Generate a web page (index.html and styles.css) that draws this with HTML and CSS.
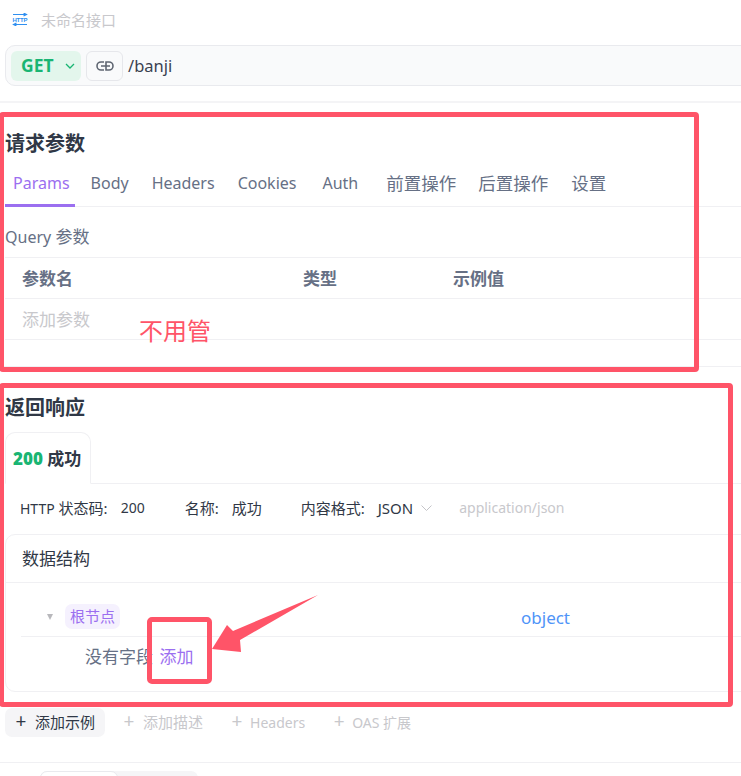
FILE: index.html
```html
<!DOCTYPE html>
<html lang="zh-CN">

<head>
  <meta charset="UTF-8">
  <meta name="viewport" content="width=device-width, initial-scale=1.0">
  <title>未命名接口</title>
  <link rel="stylesheet" href="styles.css">
</head>

<body>
  <div class="page">
    <!-- 接口名称 -->
    <div class="api-name">
      <svg class="http-icon" width="16" height="13" viewBox="0 0 16 13" fill="none" stroke="#2f8ff0" stroke-width="1.200">
        <path d="M1 1.500h13.500M11.500 0l3 1.500-3 1.500M15 11.500H1.500M4.500 10l-3 1.500 3 1.500" />
        <text class="http-text" x="0.500" y="8.800" textLength="15">HTTP</text>
      </svg>
      <span>未命名接口</span>
    </div>

    <!-- 地址栏 -->
    <div class="url-bar">
      <div class="method">
        <span>GET</span>
        <svg class="method-arrow" width="10" height="6" viewBox="0 0 10 6" fill="none" stroke="#19b573" stroke-width="1.300">
          <path d="M1 1l4 4 4-4" />
        </svg>
      </div>
      <div class="link-btn">
        <svg width="18" height="12" viewBox="0 0 18 12" fill="none" stroke="#5f6672" stroke-width="1.600">
          <path d="M8 2H5a4 4 0 0 0 0 8h3M10 2h3a4 4 0 0 1 0 8h-3zM5 6h9" />
        </svg>
      </div>
      <span class="url-text">/banji</span>
    </div>

    <!-- 请求参数 -->
    <section class="request">
      <h2 class="block-title">请求参数</h2>
      <div class="tabs">
        <span class="tab tab-en active">Params</span>
        <span class="tab tab-en">Body</span>
        <span class="tab tab-en">Headers</span>
        <span class="tab tab-en">Cookies</span>
        <span class="tab tab-en">Auth</span>
        <span class="tab">前置操作</span>
        <span class="tab">后置操作</span>
        <span class="tab">设置</span>
      </div>
      <div class="query-title"><span class="query-en">Query</span> 参数</div>
      <div class="param-row param-head">
        <span class="col-name">参数名</span>
        <span class="col-type">类型</span>
        <span>示例值</span>
      </div>
      <div class="param-row param-empty">添加参数</div>
    </section>

    <!-- 返回响应 -->
    <section class="response">
      <h2 class="block-title">返回响应</h2>
      <div class="resp-tabs">
        <div class="resp-tab"><b class="code">200</b> 成功</div>
      </div>
      <div class="resp-meta">
        <span class="meta-label"><span class="meta-en">HTTP</span> 状态码:</span>
        <span class="meta-en meta-code">200</span>
        <span class="meta-label">名称:</span>
        <span class="meta-name">成功</span>
        <span class="meta-label">内容格式:</span>
        <span>JSON</span>
        <svg class="meta-chevron" width="11" height="6" viewBox="0 0 11 6" fill="none" stroke="#c4c4c8" stroke-width="1">
          <path d="M.5.500l5 5 5-5" />
        </svg>
        <span class="meta-en meta-mime">application/json</span>
      </div>
      <div class="schema">
        <div class="schema-head">数据结构</div>
        <div class="schema-root">
          <span class="caret"></span>
          <span class="root-tag">根节点</span>
          <span class="root-type">object</span>
        </div>
        <div class="schema-empty">没有字段 <a class="add-link">添加</a></div>
      </div>
    </section>

    <!-- 底部操作 -->
    <div class="actions">
      <span class="action primary"><i>+</i>添加示例</span>
      <span class="action"><i>+</i>添加描述</span>
      <span class="action action-en"><i>+</i>Headers</span>
      <span class="action action-en"><i>+</i>OAS 扩展</span>
    </div>

    <div class="bottom-tabs">
      <span class="bottom-tab on"></span>
      <span class="bottom-tab"></span>
    </div>

    <!-- 截图上的红色标注 -->
    <div class="mark mark-request"></div>
    <div class="mark mark-response"></div>
    <div class="mark mark-add"></div>
    <div class="mark-text">不用管</div>
    <svg class="mark-arrow" width="110" height="60" viewBox="0 0 110 60">
      <polygon points="2,55 17,31 23,37 108,1 30,46 31,58" fill="#ff5468" />
    </svg>
  </div>
</body>

</html>
```

FILE: styles.css
```css
* {
  box-sizing: border-box;
}

body {
  margin: 0;
  background: #fff;
  color: #303846;
  font-family: "Noto Sans", "Noto Sans CJK SC", sans-serif;
  font-size: 17px;
}

.page {
  position: relative;
  width: 741px;
  height: 776px;
  overflow: hidden;
}

/* 接口名称 */
.api-name {
  height: 45px;
  padding: 0 0 6px 12px;
  display: flex;
  align-items: center;
  gap: 13px;
  color: #c8c8cc;
  font-size: 15px;
}

.http-text {
  font-family: "Liberation Sans", sans-serif;
  font-size: 6px;
  font-weight: 700;
  fill: #2f8ff0;
  stroke: none;
}

/* 地址栏 */
.url-bar {
  width: 760px;
  height: 41px;
  margin-left: 5px;
  padding: 0 5px;
  display: flex;
  align-items: center;
  background: #f9fafb;
  border: 1px solid #e9eaee;
  border-radius: 10px;
}

.method {
  width: 70px;
  height: 30px;
  padding: 0 0 2px 10px;
  display: flex;
  align-items: center;
  gap: 11px;
  background: #e3f6ec;
  border-radius: 6px;
  color: #19b573;
  font-weight: 700;
  font-size: 17.500px;
}

.method-arrow {
  margin-top: 2px;
}

.link-btn {
  width: 37px;
  height: 30px;
  margin-left: 5px;
  display: flex;
  align-items: center;
  justify-content: center;
  background: #f9fafb;
  border: 1px solid #e6e7eb;
  border-radius: 6px;
}

.url-text {
  margin-left: 5px;
  font-size: 16.500px;
  color: #3a4150;
}

/* 请求参数 */
.request {
  margin-top: 15px;
  height: 266px;
  padding-left: 5px;
  border-top: 2px solid #f4f4f6;
  border-bottom: 1px solid #f0f0f3;
}

.block-title {
  margin: 0;
  height: 60px;
  padding-top: 25px;
  font-size: 20px;
  line-height: 32px;
  font-weight: 700;
  color: #303846;
}

.tabs {
  height: 46px;
  margin-top: -2px;
  display: flex;
  border-bottom: 1px solid #f0f0f3;
  color: #667085;
  font-size: 17.500px;
}

.tab {
  padding: 0 8px;
  line-height: 44px;
  height: 46px;
}

.tab-en {
  font-size: 16px;
}

.tab:nth-child(1) {
  padding-right: 5px;
  margin-right: 8px;
}

.tab:nth-child(2) {
  margin-right: 7px;
}

.tab:nth-child(3) {
  margin-right: 7px;
}

.tab:nth-child(4) {
  margin-right: 10px;
}

.tab:nth-child(5) {
  margin-right: 12px;
}

.tab:nth-child(6) {
  margin-right: 6px;
}

.tab:nth-child(7) {
  margin-right: 7px;
}

.tab.active {
  color: #9b6ff0;
  border-bottom: 3px solid #9b6ff0;
}

.query-title {
  height: 51px;
  line-height: 60px;
  color: #667085;
  border-bottom: 1px solid #f0f0f3;
}

.query-en {
  font-size: 16px;
}

.param-row {
  height: 41px;
  padding-left: 17px;
  line-height: 42px;
  border-bottom: 1px solid #f0f0f3;
  display: flex;
}

.param-head {
  color: #667085;
  font-weight: 700;
}

.col-name {
  width: 281px;
}

.col-type {
  width: 150px;
}

.param-empty {
  color: #c8c8cc;
}

/* 返回响应 */
.response {
  padding-left: 5px;
}

.response .block-title {
  height: 65px;
  padding-top: 25px;
}

.resp-tabs {
  height: 52px;
  border-bottom: 1px solid #f0f0f3;
  display: flex;
}

.resp-tab {
  width: 86px;
  height: 52px;
  padding-left: 7px;
  line-height: 52px;
  font-weight: 600;
  background: #fff;
  border: 1px solid #f0f0f3;
  border-bottom: 1px solid #fff;
  border-radius: 10px 10px 0 0;
}

.code {
  color: #19b573;
}

.resp-meta {
  height: 50px;
  padding: 0 0 3px 15px;
  display: flex;
  align-items: center;
  font-size: 15px;
}

.meta-en {
  font-size: 14px;
}

.meta-label {
  margin-right: 13px;
}

.meta-code {
  margin-right: 40px;
}

.meta-name {
  margin-right: 39px;
}

.meta-chevron {
  margin-left: 8px;
}

.meta-mime {
  margin-left: 27px;
  color: #c8c8cc;
}

.schema {
  width: 760px;
  height: 158px;
  border: 1px solid #f0f0f3;
  border-radius: 10px;
}

.schema-head {
  height: 48px;
  padding-left: 16px;
  line-height: 48px;
  border-bottom: 1px solid #f0f0f3;
}

.schema-root {
  position: relative;
  height: 54px;
  margin-left: 15px;
  padding-top: 14px;
  display: flex;
  align-items: center;
  border-bottom: 1px solid #f0f0f3;
}

.caret {
  margin-left: 26px;
  width: 0;
  height: 0;
  border-left: 3.500px solid transparent;
  border-right: 3.500px solid transparent;
  border-top: 6px solid #b8b8bc;
}

.root-tag {
  margin-left: 12px;
  width: 55px;
  height: 25px;
  text-align: center;
  line-height: 25px;
  font-size: 15px;
  color: #9b6ff0;
  background: #f5f1fe;
  border-radius: 7px;
}

.root-type {
  margin: 2px 0 0 401px;
  color: #4f94f8;
}

.schema-empty {
  padding-left: 79px;
  line-height: 40px;
  color: #667085;
}

.add-link {
  margin-left: 2px;
  color: #9b6ff0;
}

/* 底部操作 */
.actions {
  height: 71px;
  padding: 16px 0 0 5px;
  display: flex;
  align-items: flex-start;
  gap: 19px;
  font-size: 15px;
  color: #c8c8cc;
  border-bottom: 1px solid #f0f0f3;
}

.action {
  height: 29px;
  line-height: 29px;
  display: flex;
  gap: 9px;
}

.action-en {
  margin-left: 10px;
  gap: 8px;
  font-size: 14px;
}

.action i {
  width: 10px;
  display: flex;
  justify-content: center;
  font-style: normal;
  font-size: 19px;
  line-height: 27px;
}

.action.primary {
  padding: 0 10px 0 11px;
  background: #f5f5f7;
  border-radius: 7px;
  color: #303846;
}

.bottom-tabs {
  margin: 8px 0 0 40px;
  width: 158px;
  height: 20px;
  display: flex;
  background: #f5f5f7;
  border-radius: 7px 7px 0 0;
}

.bottom-tab {
  width: 78px;
}

.bottom-tab.on {
  background: #fff;
  border: 1px solid #e9eaee;
  border-radius: 7px 7px 0 0;
}

/* 红色标注 */
.mark {
  position: absolute;
  border: 5px solid #ff5468;
  border-radius: 4px;
}

.mark-request {
  left: -1px;
  top: 112px;
  width: 700px;
  height: 260px;
}

.mark-response {
  left: -1px;
  top: 383px;
  width: 734px;
  height: 324px;
}

.mark-add {
  left: 147px;
  top: 617px;
  width: 65px;
  height: 67px;
  border-radius: 5px;
}

.mark-text {
  position: absolute;
  left: 139px;
  top: 313px;
  font-size: 24px;
  line-height: 36px;
  color: #ff5468;
}

.mark-arrow {
  position: absolute;
  left: 210px;
  top: 594px;
}
```
